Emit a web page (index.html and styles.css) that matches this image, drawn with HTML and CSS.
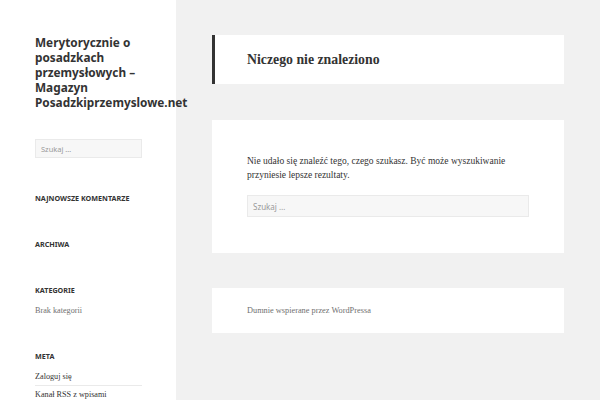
FILE: index.html
```html
<!DOCTYPE html>
<html lang="pl">
<head>
    <meta charset="UTF-8">
    <meta name="viewport" content="width=device-width, initial-scale=1.0">
    <title>Nie znaleziono - Posadzkiprzemyslowe.net</title>
    <link rel="stylesheet" href="styles.css">
</head>
<body>
    <div class="page">
        <aside class="sidebar">
            <p class="site-title">Merytorycznie o posadzkach przemysłowych – Magazyn Posadzkiprzemyslowe.net</p>
            <div class="widget widget-search">
                <input class="search-field" type="search" placeholder="Szukaj …">
            </div>
            <div class="widget">
                <h2 class="widget-title">Najnowsze komentarze</h2>
            </div>
            <div class="widget">
                <h2 class="widget-title">Archiwa</h2>
            </div>
            <div class="widget">
                <h2 class="widget-title">Kategorie</h2>
                <ul class="widget-list">
                    <li class="muted">Brak kategorii</li>
                </ul>
            </div>
            <div class="widget">
                <h2 class="widget-title">Meta</h2>
                <ul class="widget-list lined">
                    <li><a href="#">Zaloguj się</a></li>
                    <li><a href="#">Kanał RSS z wpisami</a></li>
                </ul>
            </div>
        </aside>
        <main class="content">
            <header class="page-header">
                <h1>Niczego nie znaleziono</h1>
            </header>
            <section class="box no-results">
                <p>Nie udało się znaleźć tego, czego szukasz. Być może wyszukiwanie przyniesie lepsze rezultaty.</p>
                <input class="search-field wide" type="search" placeholder="Szukaj …">
            </section>
            <footer class="box site-footer">
                <a href="#">Dumnie wspierane przez WordPressa</a>
            </footer>
        </main>
    </div>
</body>
</html>
```

FILE: styles.css
```css
body {
    margin: 0;
    padding: 0;
    background-color: #f1f1f1;
    color: #333;
    font-family: "Liberation Serif", serif;
}
.page {
    display: flex;
    height: 400px;
    overflow: hidden;
}
.sidebar {
    width: 141px;
    flex-shrink: 0;
    background-color: #fff;
    padding: 35px 0 0 35px;
}
.site-title {
    font-family: "Noto Sans", sans-serif;
    font-weight: bold;
    font-size: 11.8px;
    line-height: 15px;
    margin: 0 0 29px;
    width: 153px;
}
.widget {
    width: 107px;
    margin-bottom: 34px;
}
.widget-search {
    margin-bottom: 34px;
}
.search-field {
    display: block;
    box-sizing: border-box;
    width: 107px;
    height: 19px;
    padding: 0 5px;
    border: 1px solid #eaeaea;
    background-color: #f7f7f7;
    font-family: "Noto Sans", sans-serif;
    font-size: 7.5px;
    color: #707070;
    outline: none;
}
.search-field::placeholder {
    color: #9a9a9a;
}
.widget-title {
    font-family: "Noto Sans", sans-serif;
    font-weight: bold;
    font-size: 7.2px;
    text-transform: uppercase;
    margin: 0;
    line-height: 12px;
}
.widget-list {
    list-style: none;
    margin: 6px 0 -3px;
    padding: 0;
    font-size: 8.2px;
}
.widget-list li {
    line-height: 17px;
}
.widget-list a {
    color: #333;
    text-decoration: none;
}
.muted {
    color: #707070;
}
.lined li + li {
    border-top: 1px solid #eaeaea;
}
.content {
    width: 352px;
    padding: 35px 0 0 36px;
}
.page-header {
    background-color: #fff;
    border-left: 3px solid #333;
    padding: 0 0 0 32px;
    height: 49px;
    display: flex;
    align-items: center;
    margin-bottom: 36px;
}
.page-header h1 {
    font-size: 13.8px;
    margin: 0;
}
.box {
    background-color: #fff;
    padding: 0 35px;
}
.no-results {
    padding-top: 34px;
    padding-bottom: 36px;
    margin-bottom: 35px;
}
.no-results p {
    font-size: 9.5px;
    line-height: 14px;
    margin: 0 0 13px;
}
.search-field.wide {
    width: 282px;
    height: 22px;
    font-size: 8px;
}
.site-footer {
    height: 45px;
    display: flex;
    align-items: center;
}
.site-footer a {
    color: #707070;
    text-decoration: none;
    font-size: 8.3px;
}
```
